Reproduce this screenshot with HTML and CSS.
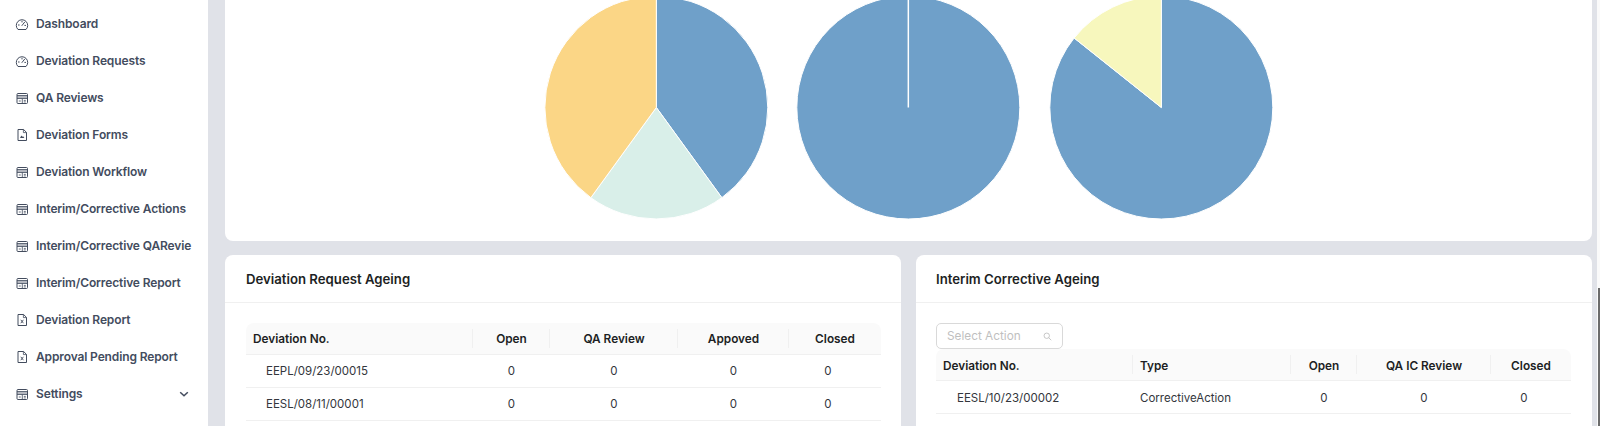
FILE: index.html
```html
<!DOCTYPE html>
<html lang="en">
<head>
    <meta charset="UTF-8">
    <title>Deviation Dashboard</title>
    <link rel="stylesheet" href="styles.css">
</head>
<body>
<svg class="icon-defs" width="0" height="0">
    <symbol id="i-gauge" viewBox="0 0 14 14">
        <path d="M3 12.5A5.7 5.7 0 1 1 11 12.5Z" fill="none" stroke="currentColor" stroke-width="1" stroke-linejoin="round"/>
        <path d="M7 8.5 9.6 5.2M3.4 8H4.2M9.8 8.4H10.6M7 4.3V5" fill="none" stroke="currentColor" stroke-width="1" stroke-linecap="round"/>
    </symbol>
    <symbol id="i-calc" viewBox="0 0 14 14">
        <rect x="2" y="2.5" width="10.5" height="10" rx="1" fill="none" stroke="currentColor" stroke-width="1"/>
        <path d="M2 4.5H12.5V7.5H2Z" fill="currentColor" opacity=".4"/>
        <path d="M2 4.5H12.5M2 7.5H12.5M7.3 7.5V12.5" fill="none" stroke="currentColor" stroke-width=".8"/>
        <path d="M3.8 10H5.8M8.8 9.4H10.8M8.8 10.9H10.8" fill="none" stroke="currentColor" stroke-width=".8"/>
    </symbol>
    <symbol id="i-file-image" viewBox="0 0 14 14">
        <path d="M3 1.5H8.6L11.5 4.4V12.5H3Z" fill="none" stroke="currentColor" stroke-width="1" stroke-linejoin="round"/>
        <path d="M8.4 1.5V4.6H11.5" fill="none" stroke="currentColor" stroke-width=".8"/>
        <path d="M5 10 6.4 7.6 7.4 8.8 8.1 8.2 9.4 10Z" fill="currentColor"/>
    </symbol>
    <symbol id="i-file-x" viewBox="0 0 14 14">
        <path d="M3 1.5H8.6L11.5 4.4V12.5H3Z" fill="none" stroke="currentColor" stroke-width="1" stroke-linejoin="round"/>
        <path d="M8.4 1.5V4.6H11.5" fill="none" stroke="currentColor" stroke-width=".8"/>
        <path d="M5.8 6.8 8.4 10.2M8.4 6.8 5.8 10.2" fill="none" stroke="currentColor" stroke-width=".9"/>
    </symbol>
</svg>

<div class="layout">
    <aside class="sidebar">
        <a class="nav-item"><svg class="nav-icon"><use href="#i-gauge"/></svg><span class="nav-label">Dashboard</span></a>
        <a class="nav-item"><svg class="nav-icon"><use href="#i-gauge"/></svg><span class="nav-label">Deviation Requests</span></a>
        <a class="nav-item"><svg class="nav-icon"><use href="#i-calc"/></svg><span class="nav-label">QA Reviews</span></a>
        <a class="nav-item"><svg class="nav-icon"><use href="#i-file-image"/></svg><span class="nav-label">Deviation Forms</span></a>
        <a class="nav-item"><svg class="nav-icon"><use href="#i-calc"/></svg><span class="nav-label">Deviation Workflow</span></a>
        <a class="nav-item"><svg class="nav-icon"><use href="#i-calc"/></svg><span class="nav-label">Interim/Corrective Actions</span></a>
        <a class="nav-item"><svg class="nav-icon"><use href="#i-calc"/></svg><span class="nav-label">Interim/Corrective QARevie</span></a>
        <a class="nav-item"><svg class="nav-icon"><use href="#i-calc"/></svg><span class="nav-label">Interim/Corrective Report</span></a>
        <a class="nav-item"><svg class="nav-icon"><use href="#i-file-x"/></svg><span class="nav-label">Deviation Report</span></a>
        <a class="nav-item"><svg class="nav-icon"><use href="#i-file-x"/></svg><span class="nav-label">Approval Pending Report</span></a>
        <a class="nav-item">
            <svg class="nav-icon"><use href="#i-calc"/></svg><span class="nav-label">Settings</span>
            <svg class="nav-arrow" viewBox="0 0 10 10"><path d="M1.2 3.2 5 6.8 8.8 3.2" fill="none" stroke="currentColor" stroke-width="1.5"/></svg>
        </a>
    </aside>

    <main class="content">
        <section class="card chart-card">
            <svg class="pie" viewBox="0 0 252 241">
                <path class="slice-blue" d="M126 107.5V-4A111.5 111.5 0 0 1 191.5 197.7Z"/>
                <path class="slice-mint" d="M126 107.5 191.5 197.7A111.5 111.5 0 0 1 60.5 197.7Z"/>
                <path class="slice-amber" d="M126 107.5 60.5 197.7A111.5 111.5 0 0 1 126 -4Z"/>
            </svg>
            <svg class="pie" viewBox="0 0 252 241">
                <circle class="slice-blue" cx="126" cy="107.5" r="111.5"/>
                <path class="slice-line" d="M126 107.5V-4"/>
            </svg>
            <svg class="pie" viewBox="0 0 252 241">
                <path class="slice-blue" d="M126 107.5V-4A111.5 111.5 0 1 1 38.8 38Z"/>
                <path class="slice-lemon" d="M126 107.5 38.8 38A111.5 111.5 0 0 1 126 -4Z"/>
            </svg>
        </section>

        <div class="card-row">
            <section class="card card-request">
                <h3 class="card-title">Deviation Request Ageing</h3>
                <div class="card-body">
                    <table class="data-table table-request">
                        <thead>
                            <tr><th>Deviation No.</th><th>Open</th><th>QA Review</th><th>Appoved</th><th>Closed</th></tr>
                        </thead>
                        <tbody>
                            <tr><td>EEPL/09/23/00015</td><td>0</td><td>0</td><td>0</td><td>0</td></tr>
                            <tr><td>EESL/08/11/00001</td><td>0</td><td>0</td><td>0</td><td>0</td></tr>
                        </tbody>
                    </table>
                </div>
            </section>
            <section class="card card-interim">
                <h3 class="card-title">Interim Corrective Ageing</h3>
                <div class="card-body">
                    <div class="select-action">
                        <span>Select Action</span>
                        <svg class="search-icon" viewBox="0 0 12 12"><circle cx="5" cy="5" r="3.6" fill="none" stroke="currentColor"/><path d="M7.7 7.7 11 11" stroke="currentColor"/></svg>
                    </div>
                    <table class="data-table table-interim">
                        <thead>
                            <tr><th>Deviation No.</th><th>Type</th><th>Open</th><th>QA IC Review</th><th>Closed</th></tr>
                        </thead>
                        <tbody>
                            <tr><td>EESL/10/23/00002</td><td>CorrectiveAction</td><td>0</td><td>0</td><td>0</td></tr>
                        </tbody>
                    </table>
                </div>
            </section>
        </div>
    </main>

    <div class="scrollbar"><div class="scroll-thumb"></div></div>
</div>
</body>
</html>
```

FILE: styles.css
```css
html, body {
    margin: 0;
    height: 100%;
    overflow: hidden;
}
body {
    font-family: Inter, "Liberation Sans", sans-serif;
    font-size: 12px;
    color: #2b2f36;
    background: #e0e2e8;
}
.icon-defs {
    display: block;
    height: 0;
}
.layout {
    display: flex;
    height: 426px;
    overflow: hidden;
}

/* sidebar */
.sidebar {
    flex: none;
    width: 208px;
    box-sizing: border-box;
    padding-top: 5px;
    background: #fff;
}
.nav-item {
    display: flex;
    align-items: center;
    height: 37px;
    padding-left: 15px;
    color: #434c5e;
}
.nav-icon {
    flex: none;
    width: 14px;
    height: 14px;
    margin-right: 7px;
}
.nav-label {
    white-space: nowrap;
    font-weight: 600;
    letter-spacing: -0.13px;
}
.nav-arrow {
    width: 10px;
    height: 10px;
    margin-left: auto;
    margin-right: 19px;
}

/* main column */
.content {
    flex: 1;
    min-width: 0;
    padding: 0 5px 0 17px;
}
.card {
    background: #fff;
    border-radius: 8px;
}
.chart-card {
    display: flex;
    justify-content: center;
    height: 241px;
    border-radius: 0 0 8px 8px;
}
.pie {
    width: 252.67px;
    height: 241px;
}
.slice-blue, .slice-mint, .slice-amber, .slice-lemon {
    stroke: #fff;
    stroke-width: 1;
}
.slice-blue { fill: #6fa0c9; }
.slice-mint { fill: #d9efe9; }
.slice-amber { fill: #fbd686; }
.slice-lemon { fill: #f7f7bd; }
.slice-line {
    stroke: #fff;
    stroke-width: 1.5;
}
.card-row {
    display: grid;
    grid-template-columns: 1fr 1fr;
    gap: 15px;
    margin-top: 14px;
}
.card-row .card {
    height: 260px;
}
.card-title {
    box-sizing: border-box;
    margin: 0;
    height: 48px;
    padding: 1px 0 0 21px;
    font-size: 13.2px;
    font-weight: 600;
    line-height: 47px;
    color: #1d1f24;
    border-bottom: 1px solid #f0f0f0;
}
.card-body {
    padding: 20px 20px 0 21px;
}
.card-interim .card-title {
    padding-left: 20px;
}
.card-interim .card-body {
    padding-left: 20px;
}

/* select box */
.select-action {
    display: flex;
    align-items: center;
    justify-content: space-between;
    box-sizing: border-box;
    width: 127px;
    height: 26px;
    padding: 0 10px;
    border: 1px solid #d9d9d9;
    border-radius: 5px;
    font-size: 11.8px;
    color: #bfbfbf;
}
.search-icon {
    width: 9px;
    height: 9px;
    color: #b5b5b5;
}

/* tables */
.data-table {
    width: 635px;
    border-collapse: separate;
    border-spacing: 0;
    table-layout: fixed;
}
.data-table th {
    position: relative;
    box-sizing: border-box;
    height: 32px;
    padding: 0 7px;
    background: #fafafa;
    border-bottom: 1px solid #f0f0f0;
    font-size: 11.8px;
    font-weight: 600;
    color: #1d1f24;
    text-align: center;
}
.data-table th:first-child {
    text-align: left;
    border-top-left-radius: 8px;
}
.data-table th:last-child {
    border-top-right-radius: 8px;
}
.data-table th:not(:last-child)::after {
    content: "";
    position: absolute;
    top: 6px;
    right: 0;
    width: 1px;
    height: 19px;
    background: #f0f0f0;
}
.data-table td {
    box-sizing: border-box;
    height: 33px;
    padding: 0 7px;
    border-bottom: 1px solid #f0f0f0;
    font-size: 11.5px;
    color: #33363c;
    text-align: center;
}
.data-table td:first-child {
    padding-left: 20px;
    text-align: left;
}
.data-table td:last-child {
    padding-right: 21px;
}
.table-request th:nth-child(1) { width: 227px; }
.table-request th:nth-child(2) { width: 77px; }
.table-request th:nth-child(3) { width: 128px; }
.table-request th:nth-child(4) { width: 111px; }
.table-interim th:nth-child(1) { width: 197px; }
.table-interim th:nth-child(2) { width: 158px; }
.table-interim th:nth-child(3) { width: 66px; }
.table-interim th:nth-child(4) { width: 134px; }
.table-interim th, .table-interim td {
    padding-top: 2px;
}
.table-interim td:first-child {
    padding-left: 21px;
}
.table-interim th:nth-child(2), .table-interim td:nth-child(2) {
    padding-left: 7px;
    text-align: left;
}

/* page scrollbar */
.scrollbar {
    flex: none;
    width: 3px;
    background: #fafafa;
}
.scroll-thumb {
    width: 2px;
    height: 138px;
    margin: 288px 0 0 1px;
    background: #6b6b6b;
}
```
